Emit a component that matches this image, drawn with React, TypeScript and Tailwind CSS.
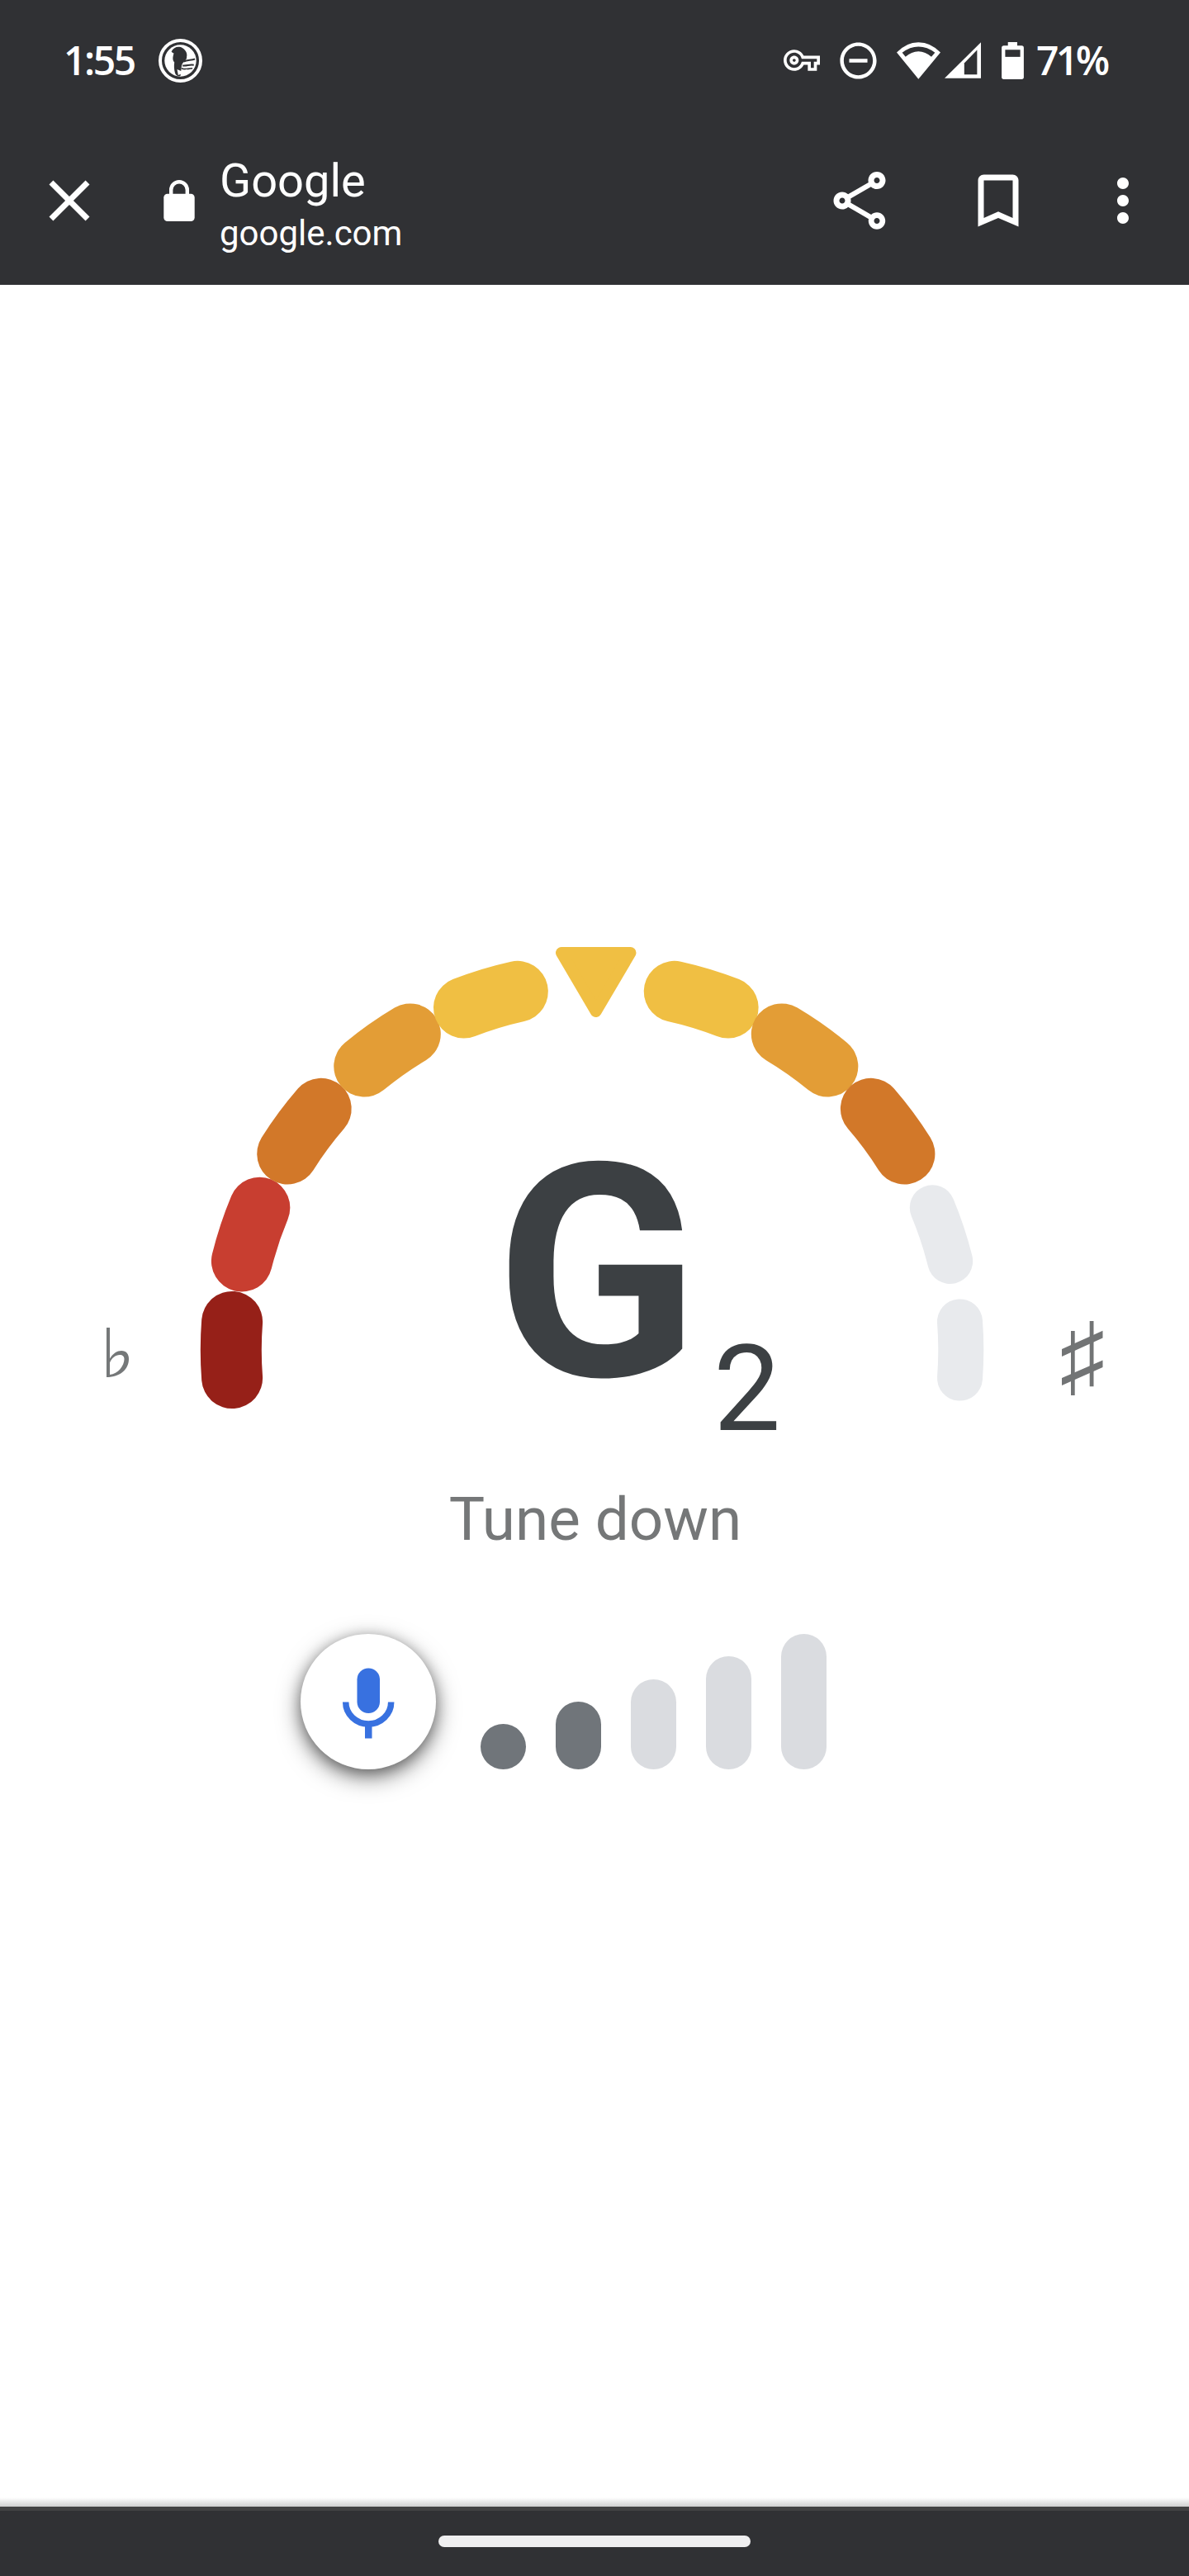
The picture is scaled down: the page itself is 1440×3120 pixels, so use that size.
import { MdBookmarkBorder, MdClose, MdMoreVert, MdOutlineShare, MdOutlineVpnKey, MdRemoveCircleOutline } from "react-icons/md";

const CX = 721.8;
const CY = 1635;
const RX = 442;
const RY = 444.5;

const segments = [
  { angle: -90, color: "#962018", width: 74 },
  { angle: -71.6, color: "#c83e30", width: 74 },
  { angle: -53.3, color: "#d27829", width: 74 },
  { angle: -35, color: "#e39d36", width: 74 },
  { angle: -16.8, color: "#f0bf43", width: 74 },
  { angle: 16.8, color: "#f0bf43", width: 74 },
  { angle: 35, color: "#e39d36", width: 74 },
  { angle: 53.3, color: "#d27829", width: 74 },
  { angle: 71.6, color: "#e8eaed", width: 55 },
  { angle: 90, color: "#e8eaed", width: 55 },
];

const levels = [
  "h-[55px] bg-[#70757a]",
  "h-[82px] bg-[#70757a]",
  "h-[109px] bg-[#dadce0]",
  "h-[137px] bg-[#dadce0]",
  "h-[164px] bg-[#dadce0]",
];

function point(angle: number) {
  const rad = (angle * Math.PI) / 180;
  return `${(CX + RX * Math.sin(rad)).toFixed(2)} ${(CY - RY * Math.cos(rad)).toFixed(2)}`;
}

function DuckIcon() {
  return (
    <svg viewBox="0 0 160 160" className="h-[53px] w-[53px]">
      <circle cx="80" cy="80" r="74" fill="none" stroke="#fff" strokeWidth="12" />
      <circle cx="80" cy="80" r="58" fill="#fff" />
      <path
        d="M47 47C55 30 74 25 88 34C100 42 106 54 103 66C104 74 98 80 91 86C84 92 84 103 83 111L80 136C70 138 62 134 60 124C57 112 56 98 58 86C49 77 53 63 56 53C52 52 50 50 47 47Z"
        fill="#303134"
      />
      <path d="M92 83C106 77 119 79 133 74M88 98C104 100 113 93 129 96" fill="none" stroke="#303134" strokeWidth="6" />
      <path d="M84 108C98 115 108 108 124 108" fill="none" stroke="#303134" strokeWidth="5" />
      <path d="M68 112L86 119L104 111L109 130L88 126L72 133Z" fill="#fff" />
    </svg>
  );
}

function WifiIcon() {
  return (
    <svg viewBox="468 60 159 134" className="h-[45px] w-[53px]">
      <path d="M468 97Q503 60 547 60Q592 60 627 97L547 194Z" fill="#fff" />
      <path d="M488 98Q516 76 547 76Q579 76 607 98L594 113Q572 93 547 93Q522 93 500 113Z" fill="#303134" />
    </svg>
  );
}

function SignalIcon() {
  return (
    <svg viewBox="641 63 133 131" className="h-11 w-11">
      <path d="M641 194L774 63V194Z" fill="#fff" />
      <path d="M713 139L760 91V181H713Z" fill="#303134" />
    </svg>
  );
}

function BatteryIcon() {
  return (
    <svg viewBox="849 61 81 136" className="h-[45px] w-[27px]">
      <rect x="849" y="74" width="81" height="123" rx="8" fill="#fff" />
      <rect x="872" y="61" width="34" height="16" fill="#fff" />
      <rect x="862" y="89" width="55" height="26" fill="#303134" />
    </svg>
  );
}

function LockIcon() {
  return (
    <svg viewBox="0 0 38 50" className="ml-[72px] h-[50px] w-[38px]">
      <path d="M9.200 20V12A9.800 9.800 0 0 1 28.800 12V20" fill="none" stroke="#fff" strokeWidth="4.400" />
      <rect x="0.300" y="16.700" width="37.400" height="33.300" rx="4.500" fill="#fff" />
    </svg>
  );
}

function StatusBar() {
  return (
    <div className="flex h-[146px] items-center pl-[77px] font-['Open_Sans'] text-[48px] leading-[48px] font-semibold">
      <span className="w-[115px] tracking-[-2.4px]">1:55</span>
      <DuckIcon />
      <div className="ml-[704px] flex items-center">
        <MdOutlineVpnKey size={44} />
        <MdRemoveCircleOutline size={53} className="ml-[20px]" />
        <div className="ml-5 flex gap-[5px]">
          <WifiIcon />
          <SignalIcon />
        </div>
        <div className="ml-[25px]">
          <BatteryIcon />
        </div>
        <span className="ml-[15px] tracking-[-3.6px]">71%</span>
      </div>
    </div>
  );
}

function Toolbar() {
  return (
    <div className="flex h-[199px] items-center pb-[5px] pl-[42px]">
      <MdClose size={84} />
      <LockIcon />
      <div className="ml-[30px] w-[300px] pt-[12px]">
        <div className="text-[56px] leading-[62px]">Google</div>
        <div className="mt-[5px] text-[42px] leading-[56px]">google.com</div>
      </div>
      <MdOutlineShare size={84} className="ml-[433px]" />
      <MdBookmarkBorder size={84} className="ml-[84px]" />
      <MdMoreVert size={84} className="ml-[67px]" />
    </div>
  );
}

function FlatIcon() {
  return (
    <svg viewBox="0 0 28 60" className="mt-[468px] h-[60px] w-7" fill="#757879">
      <path d="M0 0H4V37.5C8 31 13 28 18 28C24 28 27 32 27 38C27 50 17 60 0 60ZM4 42.5V57C14 56 21.500 46 21.500 38C21.500 35 19.500 33 16 33C11 33 6 37 4 42.500Z" />
    </svg>
  );
}

function SharpIcon() {
  return (
    <svg viewBox="0 0 50 90" className="mt-[460px] h-[90px] w-[50px]" fill="#727475">
      <path d="M11 12H15.700V90H11ZM33.700 0H38.500V79.300H33.700Z" />
      <path d="M0 34L49.500 11.700V20.500L0 43ZM0 69L49.500 47.500V56L0 78Z" />
    </svg>
  );
}

function Gauge() {
  return (
    <div className="relative h-[580px] w-[960px]">
      <svg viewBox="240 1140 960 580" className="h-full w-full">
        {segments.map((s) => (
          <path
            key={s.angle}
            d={`M${point(s.angle - 4.4)}A${RX} ${RY} 0 0 1 ${point(s.angle + 4.4)}`}
            fill="none"
            stroke={s.color}
            strokeWidth={s.width}
            strokeLinecap="round"
          />
        ))}
        <path
          d="M680 1154H763.500L721.700 1225Z"
          fill="#f0bf43"
          stroke="#f0bf43"
          strokeWidth="14"
          strokeLinejoin="round"
        />
      </svg>
      <div className="absolute top-[222px] left-[360px] flex text-[#3c4043]">
        <span className="w-[247px] text-[361px] leading-[361px] font-bold">G</span>
        <span className="mt-[248px] ml-[17px] text-[145px] leading-[145px]">2</span>
      </div>
    </div>
  );
}

function MicButton() {
  return (
    <button className="flex h-[164px] w-[164px] items-center justify-center rounded-full bg-white shadow-[0_9px_28px_rgba(0,0,0,0.5),0_4px_16px_rgba(0,0,0,0.3)]">
      <svg viewBox="0 0 164 164" className="h-full w-full">
        <rect x="68.500" y="41.500" width="27.500" height="54.500" rx="13.700" fill="#3871e0" />
        <path d="M54.700 82.500A27.500 26.500 0 0 0 109.700 82.500" fill="none" stroke="#3871e0" strokeWidth="7.500" />
        <rect x="78" y="110" width="8.500" height="16.500" fill="#3871e0" />
      </svg>
    </button>
  );
}

export default function App() {
  return (
    <div className="flex h-[3120px] w-[1440px] flex-col overflow-hidden bg-white font-['Roboto',sans-serif]">
      <header className="h-[345px] bg-[#303134] text-white">
        <StatusBar />
        <Toolbar />
      </header>

      <main className="flex-1 pt-[795px]">
        <div className="flex pl-[129px]">
          <FlatIcon />
          <div className="ml-[83px]">
            <Gauge />
          </div>
          <div className="ml-[86px]">
            <SharpIcon />
          </div>
        </div>
        <p className="mt-[70px] pl-[2px] text-center text-[72.800px] leading-[100px] text-[#757778]">Tune down</p>
        <div className="mt-[89px] flex items-end pl-[364px]">
          <MicButton />
          <div className="ml-[54px] flex items-end gap-[36px]">
            {levels.map((level) => (
              <div key={level} className={`w-[55px] rounded-full ${level}`} />
            ))}
          </div>
        </div>
      </main>

      <div className="h-[11px] bg-linear-to-b from-white to-[#cfcfcf]" />
      <footer className="flex h-[84px] items-center justify-center border-t-[5px] border-[#424243] bg-[#303134] pb-[5px]">
        <div className="h-[14px] w-[378px] rounded-full bg-[#efeff0]" />
      </footer>
    </div>
  );
}
